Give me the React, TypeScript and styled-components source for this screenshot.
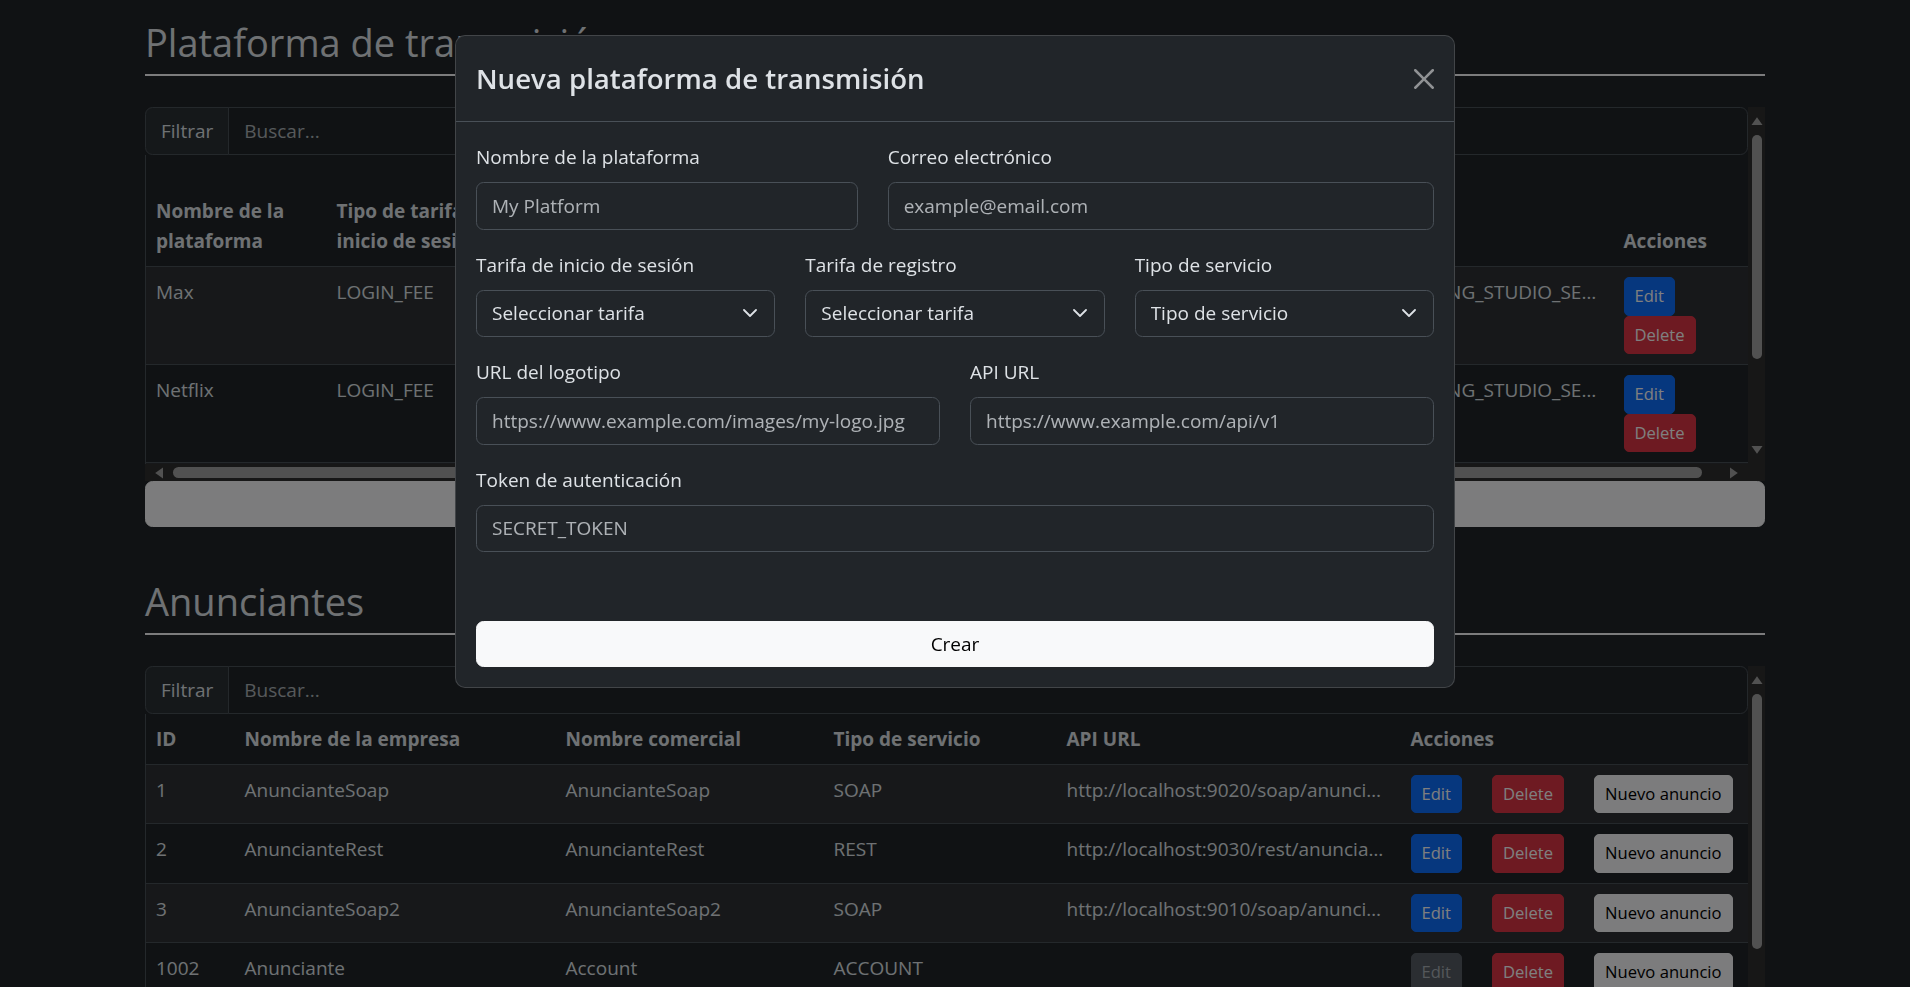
import React from "react";
import styled, { createGlobalStyle, css } from "styled-components";

const FONT = `"Open Sans", "Noto Sans", "DejaVu Sans", sans-serif`;

const GlobalStyle = createGlobalStyle`
  *, *::before, *::after { box-sizing: border-box; }
  html, body {
    margin: 0;
    background: #212529;
    color: #dee2e6;
    font-family: ${FONT};
    overflow: hidden;
  }
`;

const Page = styled.main`
  width: 1620px;
  margin: 0 auto;
  padding-top: 18px;
`;

const Section = styled.section``;

const SectionTitle = styled.h2`
  margin: 0;
  font-size: 38px;
  font-weight: 500;
  line-height: 48px;
  color: #dee2e6;
`;

const Rule = styled.hr`
  margin: 8px 0 31px;
  border: 0;
  border-top: 2px solid #f8f9fa;
  opacity: 1;
`;

/* ---------- scroll frame with drawn scrollbars ---------- */

const BAR = 17;

const ScrollFrame = styled.div<{ $viewHeight: number; $hbar?: boolean }>`
  display: grid;
  grid-template-columns: minmax(0, 1fr) ${BAR}px;
  grid-template-rows: ${(p) => `${p.$viewHeight}px`} ${(p) => (p.$hbar ? `${BAR}px` : "")};
`;

const Viewport = styled.div`
  overflow: hidden;
  min-width: 0;
`;

const VBar = styled.div`
  display: flex;
  flex-direction: column;
  background: #2e2e2e;
`;

const HBar = styled.div`
  display: flex;
  background: #2e2e2e;
`;

const Corner = styled.div`
  background: #2e2e2e;
`;

const ArrowBox = styled.div`
  flex: 0 0 28px;
  display: flex;
  align-items: center;
  justify-content: center;
`;

const VTrack = styled.div`
  flex: 1;
  display: flex;
  flex-direction: column;
  align-items: center;
`;

const HTrack = styled.div`
  flex: 1;
  display: flex;
  align-items: center;
`;

const VThumb = styled.div<{ $size: number }>`
  width: 10px;
  height: ${(p) => p.$size}px;
  border-radius: 5px;
  background: #a3a3a3;
`;

const HThumb = styled.div<{ $size: number }>`
  height: 11px;
  width: ${(p) => p.$size}px;
  border-radius: 5.5px;
  background: #a3a3a3;
`;

type Dir = "up" | "down" | "left" | "right";
const rotation: Record<Dir, number> = { up: 0, right: 90, down: 180, left: 270 };

const ArrowSvg = styled.svg<{ $dir: Dir }>`
  transform: rotate(${(p) => rotation[p.$dir]}deg);
`;

const Arrow = ({ dir }: { dir: Dir }) => (
  <ArrowBox>
    <ArrowSvg $dir={dir} width="12" height="12" viewBox="0 0 12 12">
      <path d="M6 2.2 11.5 10H.5Z" fill="#a3a3a3" />
    </ArrowSvg>
  </ArrowBox>
);

/* ---------- filter + table ---------- */

const InputGroup = styled.div`
  display: flex;
  height: 47.5px;
`;

const Addon = styled.span`
  display: flex;
  align-items: center;
  padding: 0 15px;
  background: #2b3035;
  border: 1px solid #495057;
  border-radius: 7.5px 0 0 7.5px;
  font-size: 19px;
  line-height: 30px;
  color: #dee2e6;
`;

const SearchInput = styled.input`
  flex: 1;
  min-width: 0;
  margin-left: -1px;
  padding: 0 15px;
  background: #212529;
  border: 1px solid #495057;
  border-radius: 0 7.5px 7.5px 0;
  font-family: inherit;
  font-size: 19px;
  color: #dee2e6;
  outline: none;
  &::placeholder {
    color: rgba(222, 226, 230, 0.75);
  }
`;

const Table = styled.table<{ $width: string }>`
  width: ${(p) => p.$width};
  table-layout: fixed;
  border-collapse: collapse;
  border-left: 1px solid #495057;
  border-right: 1px solid #495057;
`;

const HeadRow = styled.tr<{ $height?: number }>`
  height: ${(p) => (p.$height ? `${p.$height}px` : "auto")};
`;

const HeadCell = styled.th`
  padding: 10px;
  text-align: left;
  vertical-align: bottom;
  font-size: 19px;
  font-weight: 700;
  line-height: 30px;
  color: #dee2e6;
  border-bottom: 1px solid #495057;
`;

const BodyRow = styled.tr`
  &:nth-child(odd) > td {
    background: rgba(255, 255, 255, 0.06);
  }
`;

const Cell = styled.td`
  padding: 10px;
  vertical-align: top;
  font-size: 19px;
  line-height: 30px;
  color: #dee2e6;
  border-bottom: 1px solid #495057;
  white-space: nowrap;
  overflow: hidden;
  text-overflow: ellipsis;
`;

const ActionStack = styled.div`
  display: flex;
  flex-direction: column;
  align-items: flex-start;
`;

const ActionRow = styled.div`
  display: flex;
  gap: 30px;
`;

type Variant = "primary" | "danger" | "light" | "disabled";

const variants: Record<Variant, ReturnType<typeof css>> = {
  primary: css`
    background: #0d6efd;
    border-color: #0d6efd;
    color: #fff;
  `,
  danger: css`
    background: #dc3545;
    border-color: #dc3545;
    color: #fff;
  `,
  light: css`
    background: #f8f9fa;
    border-color: #f8f9fa;
    color: #000;
  `,
  disabled: css`
    background: #565d65;
    border-color: #565d65;
    color: #aab0b6;
  `,
};

const SmallButton = styled.button<{ $variant: Variant }>`
  height: 38.5px;
  padding: 0 10px;
  border: 1px solid;
  border-radius: 5px;
  font-family: inherit;
  font-size: 16.6px;
  line-height: 26px;
  white-space: nowrap;
  ${(p) => variants[p.$variant]}
`;

const WideButton = styled.button`
  display: block;
  width: 100%;
  height: 46px;
  margin-bottom: 50px;
  background: #f8f9fa;
  border: 1px solid #f8f9fa;
  border-radius: 7.5px;
  font-family: inherit;
  font-size: 19px;
  color: #000;
`;

/* ---------- modal ---------- */

const Backdrop = styled.div`
  position: fixed;
  inset: 0;
  background: rgba(0, 0, 0, 0.5);
`;

const ModalLayer = styled.div`
  position: fixed;
  inset: 0;
  overflow: hidden;
`;

const Dialog = styled.div`
  width: 1000px;
  margin: 35px auto;
  background: #212529;
  border: 1px solid rgba(255, 255, 255, 0.15);
  border-radius: 10px;
`;

const ModalHeader = styled.div`
  display: flex;
  align-items: center;
  justify-content: space-between;
  padding: 20px;
  border-bottom: 1px solid #495057;
`;

const ModalTitle = styled.h3`
  margin: 0;
  font-size: 27.6px;
  font-weight: 600;
  line-height: 45px;
  color: #dee2e6;
`;

const CloseButton = styled.button`
  display: flex;
  width: 20px;
  height: 20px;
  padding: 0;
  border: 0;
  background: none;
  opacity: 0.5;
`;

const ModalBody = styled.form`
  padding: 20px;
`;

const FieldRow = styled.div<{ $cols: string }>`
  display: grid;
  grid-template-columns: ${(p) => p.$cols};
  column-gap: 30px;
  margin-bottom: 20px;
`;

const Field = styled.div``;

const Label = styled.label`
  display: block;
  margin-bottom: 10px;
  font-size: 19px;
  line-height: 30px;
  color: #dee2e6;
`;

const fieldBox = css`
  display: block;
  width: 100%;
  height: 47.5px;
  padding: 0 15px;
  background: #212529;
  border: 1px solid #495057;
  border-radius: 7.5px;
  font-family: inherit;
  font-size: 19px;
  color: #dee2e6;
  outline: none;
`;

const TextInput = styled.input`
  ${fieldBox}
  &::placeholder {
    color: rgba(222, 226, 230, 0.75);
  }
`;

const SelectWrap = styled.div`
  position: relative;
`;

const Select = styled.select`
  ${fieldBox}
  appearance: none;
  padding-right: 45px;
`;

const Chevron = styled.svg`
  position: absolute;
  right: 18px;
  top: 50%;
  transform: translateY(-50%);
  pointer-events: none;
`;

const SubmitButton = styled.button`
  display: block;
  width: 100%;
  height: 46.5px;
  margin-top: 68.5px;
  background: #f8f9fa;
  border: 1px solid #f8f9fa;
  border-radius: 7.5px;
  font-family: inherit;
  font-size: 19px;
  color: #000;
`;

/* ---------- data ---------- */

const platforms = [
  {
    name: "Max",
    login: "LOGIN_FEE",
    reg: "REGISTRATION_FEE",
    email: "contact@max.com",
    logo: "https://www.max.com/images/logo.png",
    api: "http://localhost:9040/api",
    service: "STREAMING_STUDIO_SERVICE",
  },
  {
    name: "Netflix",
    login: "LOGIN_FEE",
    reg: "REGISTRATION_FEE",
    email: "contact@netflix.com",
    logo: "https://www.netflix.com/images/logo.png",
    api: "http://localhost:9050/api",
    service: "STREAMING_STUDIO_SERVICE",
  },
  {
    name: "Disney+",
    login: "LOGIN_FEE",
    reg: "REGISTRATION_FEE",
    email: "contact@disney.com",
    logo: "https://www.disney.com/images/logo.png",
    api: "http://localhost:9060/api",
    service: "STREAMING_STUDIO_SERVICE",
  },
  {
    name: "Prime Video",
    login: "LOGIN_FEE",
    reg: "REGISTRATION_FEE",
    email: "contact@primevideo.com",
    logo: "https://www.primevideo.com/images/logo.png",
    api: "http://localhost:9070/api",
    service: "STREAMING_STUDIO_SERVICE",
  },
];

const platformCols = [181, 220, 200, 250, 200, 163, 254, 182];

const advertisers = [
  { id: "1", company: "AnuncianteSoap", trade: "AnuncianteSoap", type: "SOAP", url: "http://localhost:9020/soap/anunciantes", editable: true },
  { id: "2", company: "AnuncianteRest", trade: "AnuncianteRest", type: "REST", url: "http://localhost:9030/rest/anunciantes", editable: true },
  { id: "3", company: "AnuncianteSoap2", trade: "AnuncianteSoap2", type: "SOAP", url: "http://localhost:9010/soap/anunciantes", editable: true },
  { id: "1002", company: "Anunciante", trade: "Account", type: "ACCOUNT", url: "", editable: false },
  { id: "1003", company: "Anunciante2", trade: "Account2", type: "ACCOUNT", url: "", editable: false },
  { id: "1004", company: "Anunciante3", trade: "Account3", type: "ACCOUNT", url: "", editable: false },
  { id: "1005", company: "Anunciante4", trade: "Account4", type: "ACCOUNT", url: "", editable: false },
];

const advertiserCols = [89, 321, 268, 233, 344, 348];

const ChevronIcon = () => (
  <Chevron width="14" height="9" viewBox="0 0 14 9" fill="none">
    <path d="M1 1.5 7 7.5 13 1.5" stroke="#dee2e6" strokeWidth="1.8" strokeLinecap="round" strokeLinejoin="round" />
  </Chevron>
);

const CloseIcon = () => (
  <svg width="20" height="20" viewBox="0 0 16 16">
    <path
      fill="#fff"
      d="M.293.293a1 1 0 0 1 1.414 0L8 6.586 14.293.293a1 1 0 1 1 1.414 1.414L9.414 8l6.293 6.293a1 1 0 0 1-1.414 1.414L8 9.414l-6.293 6.293a1 1 0 0 1-1.414-1.414L6.586 8 .293 1.707a1 1 0 0 1 0-1.414"
    />
  </svg>
);

function FilterBar() {
  return (
    <InputGroup>
      <Addon>Filtrar</Addon>
      <SearchInput placeholder="Buscar..." />
    </InputGroup>
  );
}

function VerticalScrollbar({ thumb }: { thumb: number }) {
  return (
    <VBar>
      <Arrow dir="up" />
      <VTrack>
        <VThumb $size={thumb} />
      </VTrack>
      <Arrow dir="down" />
    </VBar>
  );
}

function HorizontalScrollbar({ thumb }: { thumb: number }) {
  return (
    <HBar>
      <Arrow dir="left" />
      <HTrack>
        <HThumb $size={thumb} />
      </HTrack>
      <Arrow dir="right" />
    </HBar>
  );
}

function ModalSelect({ label, placeholder }: { label: string; placeholder: string }) {
  return (
    <Field>
      <Label>{label}</Label>
      <SelectWrap>
        <Select defaultValue="">
          <option value="">{placeholder}</option>
        </Select>
        <ChevronIcon />
      </SelectWrap>
    </Field>
  );
}

function ModalInput({ label, placeholder }: { label: string; placeholder: string }) {
  return (
    <Field>
      <Label>{label}</Label>
      <TextInput placeholder={placeholder} />
    </Field>
  );
}

export default function App() {
  return (
    <>
      <GlobalStyle />
      <Page>
        <Section>
          <SectionTitle>Plataforma de transmisión</SectionTitle>
          <Rule />
          <ScrollFrame $viewHeight={357} $hbar>
            <Viewport>
              <FilterBar />
              <Table $width="1650px">
                <colgroup>
                  {platformCols.map((w, i) => (
                    <col key={i} style={{ width: w }} />
                  ))}
                </colgroup>
                <thead>
                  <HeadRow $height={112}>
                    <HeadCell>Nombre de la plataforma</HeadCell>
                    <HeadCell>Tipo de tarifa de inicio de sesión</HeadCell>
                    <HeadCell>Tipo de tarifa de registro</HeadCell>
                    <HeadCell>Correo electrónico</HeadCell>
                    <HeadCell>URL del logotipo</HeadCell>
                    <HeadCell>API URL</HeadCell>
                    <HeadCell>Servicio</HeadCell>
                    <HeadCell>Acciones</HeadCell>
                  </HeadRow>
                </thead>
                <tbody>
                  {platforms.map((p) => (
                    <BodyRow key={p.name}>
                      <Cell>{p.name}</Cell>
                      <Cell>{p.login}</Cell>
                      <Cell>{p.reg}</Cell>
                      <Cell>{p.email}</Cell>
                      <Cell>{p.logo}</Cell>
                      <Cell>{p.api}</Cell>
                      <Cell>{p.service}</Cell>
                      <Cell>
                        <ActionStack>
                          <SmallButton $variant="primary">Edit</SmallButton>
                          <SmallButton $variant="danger">Delete</SmallButton>
                        </ActionStack>
                      </Cell>
                    </BodyRow>
                  ))}
                </tbody>
              </Table>
            </Viewport>
            <VerticalScrollbar thumb={224} />
            <HorizontalScrollbar thumb={1529} />
            <Corner />
          </ScrollFrame>
          <WideButton>Nueva plataforma de transmisión</WideButton>
        </Section>

        <Section>
          <SectionTitle>Anunciantes</SectionTitle>
          <Rule />
          <ScrollFrame $viewHeight={375}>
            <Viewport>
              <FilterBar />
              <Table $width="100%">
                <colgroup>
                  {advertiserCols.map((w, i) => (
                    <col key={i} style={{ width: w }} />
                  ))}
                </colgroup>
                <thead>
                  <HeadRow>
                    <HeadCell>ID</HeadCell>
                    <HeadCell>Nombre de la empresa</HeadCell>
                    <HeadCell>Nombre comercial</HeadCell>
                    <HeadCell>Tipo de servicio</HeadCell>
                    <HeadCell>API URL</HeadCell>
                    <HeadCell>Acciones</HeadCell>
                  </HeadRow>
                </thead>
                <tbody>
                  {advertisers.map((a) => (
                    <BodyRow key={a.id}>
                      <Cell>{a.id}</Cell>
                      <Cell>{a.company}</Cell>
                      <Cell>{a.trade}</Cell>
                      <Cell>{a.type}</Cell>
                      <Cell>{a.url}</Cell>
                      <Cell>
                        <ActionRow>
                          <SmallButton $variant={a.editable ? "primary" : "disabled"} disabled={!a.editable}>
                            Edit
                          </SmallButton>
                          <SmallButton $variant="danger">Delete</SmallButton>
                          <SmallButton $variant="light">Nuevo anuncio</SmallButton>
                        </ActionRow>
                      </Cell>
                    </BodyRow>
                  ))}
                </tbody>
              </Table>
            </Viewport>
            <VerticalScrollbar thumb={255} />
          </ScrollFrame>
        </Section>
      </Page>

      <Backdrop />
      <ModalLayer>
        <Dialog>
          <ModalHeader>
            <ModalTitle>Nueva plataforma de transmisión</ModalTitle>
            <CloseButton type="button" aria-label="Close">
              <CloseIcon />
            </CloseButton>
          </ModalHeader>
          <ModalBody onSubmit={(e) => e.preventDefault()}>
            <FieldRow $cols="381.7px 1fr">
              <ModalInput label="Nombre de la plataforma" placeholder="My Platform" />
              <ModalInput label="Correo electrónico" placeholder="example@email.com" />
            </FieldRow>
            <FieldRow $cols="repeat(3, 1fr)">
              <ModalSelect label="Tarifa de inicio de sesión" placeholder="Seleccionar tarifa" />
              <ModalSelect label="Tarifa de registro" placeholder="Seleccionar tarifa" />
              <ModalSelect label="Tipo de servicio" placeholder="Tipo de servicio" />
            </FieldRow>
            <FieldRow $cols="1fr 1fr">
              <ModalInput label="URL del logotipo" placeholder="https://www.example.com/images/my-logo.jpg" />
              <ModalInput label="API URL" placeholder="https://www.example.com/api/v1" />
            </FieldRow>
            <FieldRow $cols="1fr">
              <ModalInput label="Token de autenticación" placeholder="SECRET_TOKEN" />
            </FieldRow>
            <SubmitButton type="submit">Crear</SubmitButton>
          </ModalBody>
        </Dialog>
      </ModalLayer>
    </>
  );
}
